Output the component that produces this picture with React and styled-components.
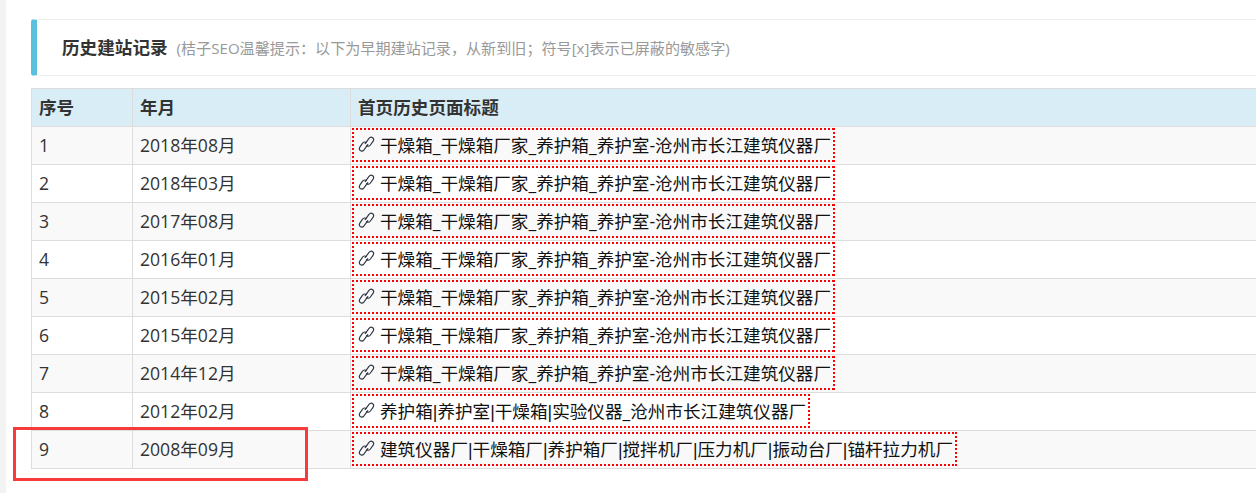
import React from "react";
import styled, { createGlobalStyle } from "styled-components";

const Global = createGlobalStyle`
  html, body { margin: 0; padding: 0; background: #fff; overflow: hidden; }
  body { font-family: "Open Sans", "Noto Sans CJK SC", sans-serif; }
`;

const Page = styled.div`
  position: relative;
  width: 1256px;
  height: 493px;
  overflow: hidden;
  box-sizing: border-box;
  border-left: 6px solid #f3f3f4;
  padding: 19px 0 0 25px;
`;

const Notice = styled.div`
  width: 1300px;
  height: 57px;
  box-sizing: border-box;
  display: flex;
  align-items: center;
  gap: 9px;
  padding: 0 0 2px 25px;
  border: 1px solid #eeeeee;
  border-left: 6px solid #5bc0de;
  border-radius: 3px;
  margin-bottom: 12px;
`;

const Title = styled.h4`
  margin: 0;
  font-size: 17.6px;
  font-weight: 700;
  color: #333;
  white-space: nowrap;
`;

const Hint = styled.small`
  font-size: 15.1px;
  color: #999;
  white-space: nowrap;
`;

const Table = styled.table`
  width: 1300px;
  border-collapse: collapse;
  table-layout: fixed;
  font-size: 17.6px;
  color: #333;
`;

const Head = styled.th`
  width: ${(p) => p.$w}px;
  height: 38px;
  box-sizing: border-box;
  padding: 0 7px 1px;
  line-height: 24px;
  background: #d9edf7;
  border: 1px solid #dddddd;
  text-align: left;
  font-weight: 700;
  white-space: nowrap;
`;

const Row = styled.tr`
  background: ${(p) => (p.$odd ? "#f9f9f9" : "#fff")};
`;

const Cell = styled.td`
  height: 38px;
  box-sizing: border-box;
  padding: 0 7px 1px;
  line-height: 24px;
  border: 1px solid #dddddd;
  white-space: nowrap;
`;

const LinkCell = styled(Cell)`
  padding: 1px 1px 0;
  vertical-align: top;
`;

const PageLink = styled.a`
  display: inline-flex;
  align-items: center;
  height: 34px;
  box-sizing: border-box;
  padding: 0 4px 2px 6px;
  gap: 5px;
  color: #111;
  vertical-align: top;
  background:
    repeating-linear-gradient(90deg, #f00 0 2px, transparent 2px 4px) left top / 100% 2px no-repeat,
    repeating-linear-gradient(90deg, #f00 0 2px, transparent 2px 4px) left bottom / 100% 2px no-repeat,
    repeating-linear-gradient(0deg, #f00 0 2px, transparent 2px 4px) left top / 2px 100% no-repeat,
    repeating-linear-gradient(0deg, #f00 0 2px, transparent 2px 4px) right top / 2px 100% no-repeat;
`;

const Pipe = styled.span`
  font-family: "Liberation Sans", sans-serif;
`;

const Label = styled.span`
  display: block;
  position: relative;
  top: 1px;
`;

const Overlay = styled.div`
  position: absolute;
  left: 7px;
  top: 427px;
  width: 295px;
  height: 54px;
  box-sizing: border-box;
  border: 3px solid #f73a3a;
  pointer-events: none;
`;

const ChainIcon = () => (
  <svg width="17" height="17" viewBox="0 0 17 17" fill="none" stroke="#2f3644" strokeWidth="1.15" strokeLinecap="round">
    <path d="M7.2 7.6 11 2.4c1-1.3 2.6-1.5 3.7-.7 1.1.9 1.2 2.4.3 3.7l-2.6 3.6c-1 1.3-2.6 1.6-3.7.7" />
    <path d="M9.8 8.6 6 13.8c-1 1.3-2.6 1.5-3.7.7-1.1-.9-1.2-2.4-.3-3.7l2.6-3.6c1-1.3 2.6-1.6 3.7-.7" />
  </svg>
);

const common = "干燥箱_干燥箱厂家_养护箱_养护室-沧州市长江建筑仪器厂";
const rows = [
  ["1", "2018年08月", common],
  ["2", "2018年03月", common],
  ["3", "2017年08月", common],
  ["4", "2016年01月", common],
  ["5", "2015年02月", common],
  ["6", "2015年02月", common],
  ["7", "2014年12月", common],
  ["8", "2012年02月", "养护箱|养护室|干燥箱|实验仪器_沧州市长江建筑仪器厂"],
  ["9", "2008年09月", "建筑仪器厂|干燥箱厂|养护箱厂|搅拌机厂|压力机厂|振动台厂|锚杆拉力机厂"],
];

const withPipes = (text) =>
  text.split("|").flatMap((part, i) =>
    i === 0 ? [part] : [<Pipe key={i}>|</Pipe>, part]
  );

export default function App() {
  return (
    <Page>
      <Global />
      <Notice>
        <Title>历史建站记录</Title>
        <Hint>(桔子SEO温馨提示：以下为早期建站记录，从新到旧；符号[x]表示已屏蔽的敏感字)</Hint>
      </Notice>
      <Table>
        <thead>
          <tr>
            <Head $w={101}>序号</Head>
            <Head $w={218}>年月</Head>
            <Head $w={981}>首页历史页面标题</Head>
          </tr>
        </thead>
        <tbody>
          {rows.map(([n, d, t], i) => (
            <Row key={n} $odd={i % 2 === 0}>
              <Cell>{n}</Cell>
              <Cell>{d}</Cell>
              <LinkCell>
                <PageLink>
                  <ChainIcon />
                  <Label>{withPipes(t)}</Label>
                </PageLink>
              </LinkCell>
            </Row>
          ))}
        </tbody>
      </Table>
      <Overlay />
    </Page>
  );
}
